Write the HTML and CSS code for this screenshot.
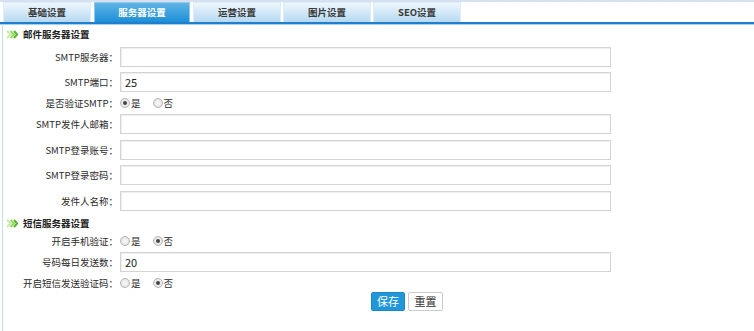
FILE: index.html
```html
<!DOCTYPE html>
<html>
<head>
<meta charset="utf-8">
<title>服务器设置</title>
<link rel="stylesheet" href="styles.css">
</head>
<body>
<div class="topline"></div>
<div class="tabs">
  <div class="tab">基础设置</div>
  <div class="tab active">服务器设置</div>
  <div class="tab">运营设置</div>
  <div class="tab">图片设置</div>
  <div class="tab">SEO设置</div>
</div>
<div class="panel">
  <div class="sec">
    <svg class="chev" width="12" height="9" viewBox="0 0 12 9"><path d="M1 1l3.5 3.5L1 8" fill="none" stroke="#c9ecaa" stroke-width="2"/><path d="M4.5 1L8 4.5 4.5 8" fill="none" stroke="#93d65e" stroke-width="2"/><path d="M8 1l3.2 3.5L8 8" fill="none" stroke="#55b52c" stroke-width="2"/></svg>
    <span>邮件服务器设置</span>
  </div>
  <div class="row in"><label>SMTP服务器：</label><input class="txt" type="text" value=""></div>
  <div class="row in"><label>SMTP端口：</label><input class="txt" type="text" value="25"></div>
  <div class="row rd"><label>是否验证SMTP：</label>
    <span class="opt"><span class="radio on"></span>是</span><span class="opt"><span class="radio"></span>否</span></div>
  <div class="row in"><label>SMTP发件人邮箱：</label><input class="txt" type="text" value=""></div>
  <div class="row in"><label>SMTP登录账号：</label><input class="txt" type="text" value=""></div>
  <div class="row in"><label>SMTP登录密码：</label><input class="txt" type="text" value=""></div>
  <div class="row in"><label>发件人名称：</label><input class="txt" type="text" value=""></div>
  <div class="sec sec2">
    <svg class="chev" width="12" height="9" viewBox="0 0 12 9"><path d="M1 1l3.5 3.5L1 8" fill="none" stroke="#c9ecaa" stroke-width="2"/><path d="M4.5 1L8 4.5 4.5 8" fill="none" stroke="#93d65e" stroke-width="2"/><path d="M8 1l3.2 3.5L8 8" fill="none" stroke="#55b52c" stroke-width="2"/></svg>
    <span>短信服务器设置</span>
  </div>
  <div class="row rd"><label>开启手机验证：</label>
    <span class="opt"><span class="radio"></span>是</span><span class="opt"><span class="radio on"></span>否</span></div>
  <div class="row in"><label>号码每日发送数：</label><input class="txt" type="text" value="20"></div>
  <div class="row rd"><label>开启短信发送验证码：</label>
    <span class="opt"><span class="radio"></span>是</span><span class="opt"><span class="radio on"></span>否</span></div>
  <div class="btns"><button class="btn save">保存</button><button class="btn reset">重置</button></div>
</div>
</body>
</html>
```
FILE: styles.css
```css
* { box-sizing: border-box; }
html, body { margin: 0; padding: 0; background: #fff; }
body {
  font-family: "Noto Sans CJK SC", "Liberation Sans", sans-serif;
  font-size: 9.5px;
  color: #2a2a2a;
  width: 754px;
  height: 331px;
  overflow: hidden;
}
.topline { height: 2px; background: #d6e0ee; }
.tabs {
  display: flex;
  padding-left: 3px;
  height: 22px;
  border-bottom: 2px solid #1f7fcf;
  box-shadow: 0 1px 0 #a9d1ef;
}
.tab {
  width: 88px;
  height: 20px;
  margin-right: 2px;
  text-align: center;
  line-height: 19px;
  font-weight: bold;
  color: #3a3a3a;
  background: linear-gradient(#eef6fc, #b6d9f2);
  border: 1px solid #dcecf8;
  border-bottom: 0;
}
.tab:nth-child(3) { margin-left: 1px; }
.tab.active {
  width: 96px;
  margin-left: 1px;
  color: #fff;
  background: linear-gradient(#5fb4e6, #1d8fd6);
  border-color: #8fcaf0;
}
.panel {
  border-left: 1px solid #c9dcef;
  margin-left: 2px;
  height: 310px;
}
.sec {
  display: flex;
  align-items: center;
  height: 20px;
  padding-left: 3px;
  font-weight: bold;
  color: #222;
}
.sec2 { height: 19px; }
.chev { margin-right: 5px; }
.row { display: flex; align-items: center; }
.row label {
  width: 115px;
  text-align: right;
  flex: none;
}
.row.in { height: 25.5px; }
.row.rd { height: 16.5px; }
.txt {
  width: 491px;
  height: 20px;
  margin-left: 2px;
  border: 1px solid #d4d4d4;
  box-shadow: inset 1px 1px 1px #eee;
  padding: 0 4px;
  font-family: "Noto Sans CJK SC", "Liberation Sans", sans-serif;
  font-size: 11px;
  color: #222;
  outline: none;
}
.opt { display: inline-flex; align-items: center; margin-left: 2px; margin-right: 10px; }
.radio {
  width: 10px; height: 10px;
  border-radius: 50%;
  border: 1px solid #b5b5b5;
  background: radial-gradient(#fafafa, #dcdcdc);
  margin-right: 1px;
  position: relative;
}
.radio.on::after {
  content: "";
  position: absolute;
  left: 2px; top: 2px;
  width: 4px; height: 4px;
  border-radius: 50%;
  background: #444;
}
.btns { display: flex; justify-content: center; padding-left: 57px; padding-top: 1px; gap: 3px; }
.btn {
  height: 19px;
  padding: 0;
  font-family: "Noto Sans CJK SC", sans-serif;
  font-size: 11px;
  line-height: 17px;
  border-radius: 2px;
}
.save { background: #2196d9; color: #fff; border: 1px solid #1b87c6; width: 34px; }
.reset { background: #fff; color: #333; border: 1px solid #ccc; width: 35px; }
```
